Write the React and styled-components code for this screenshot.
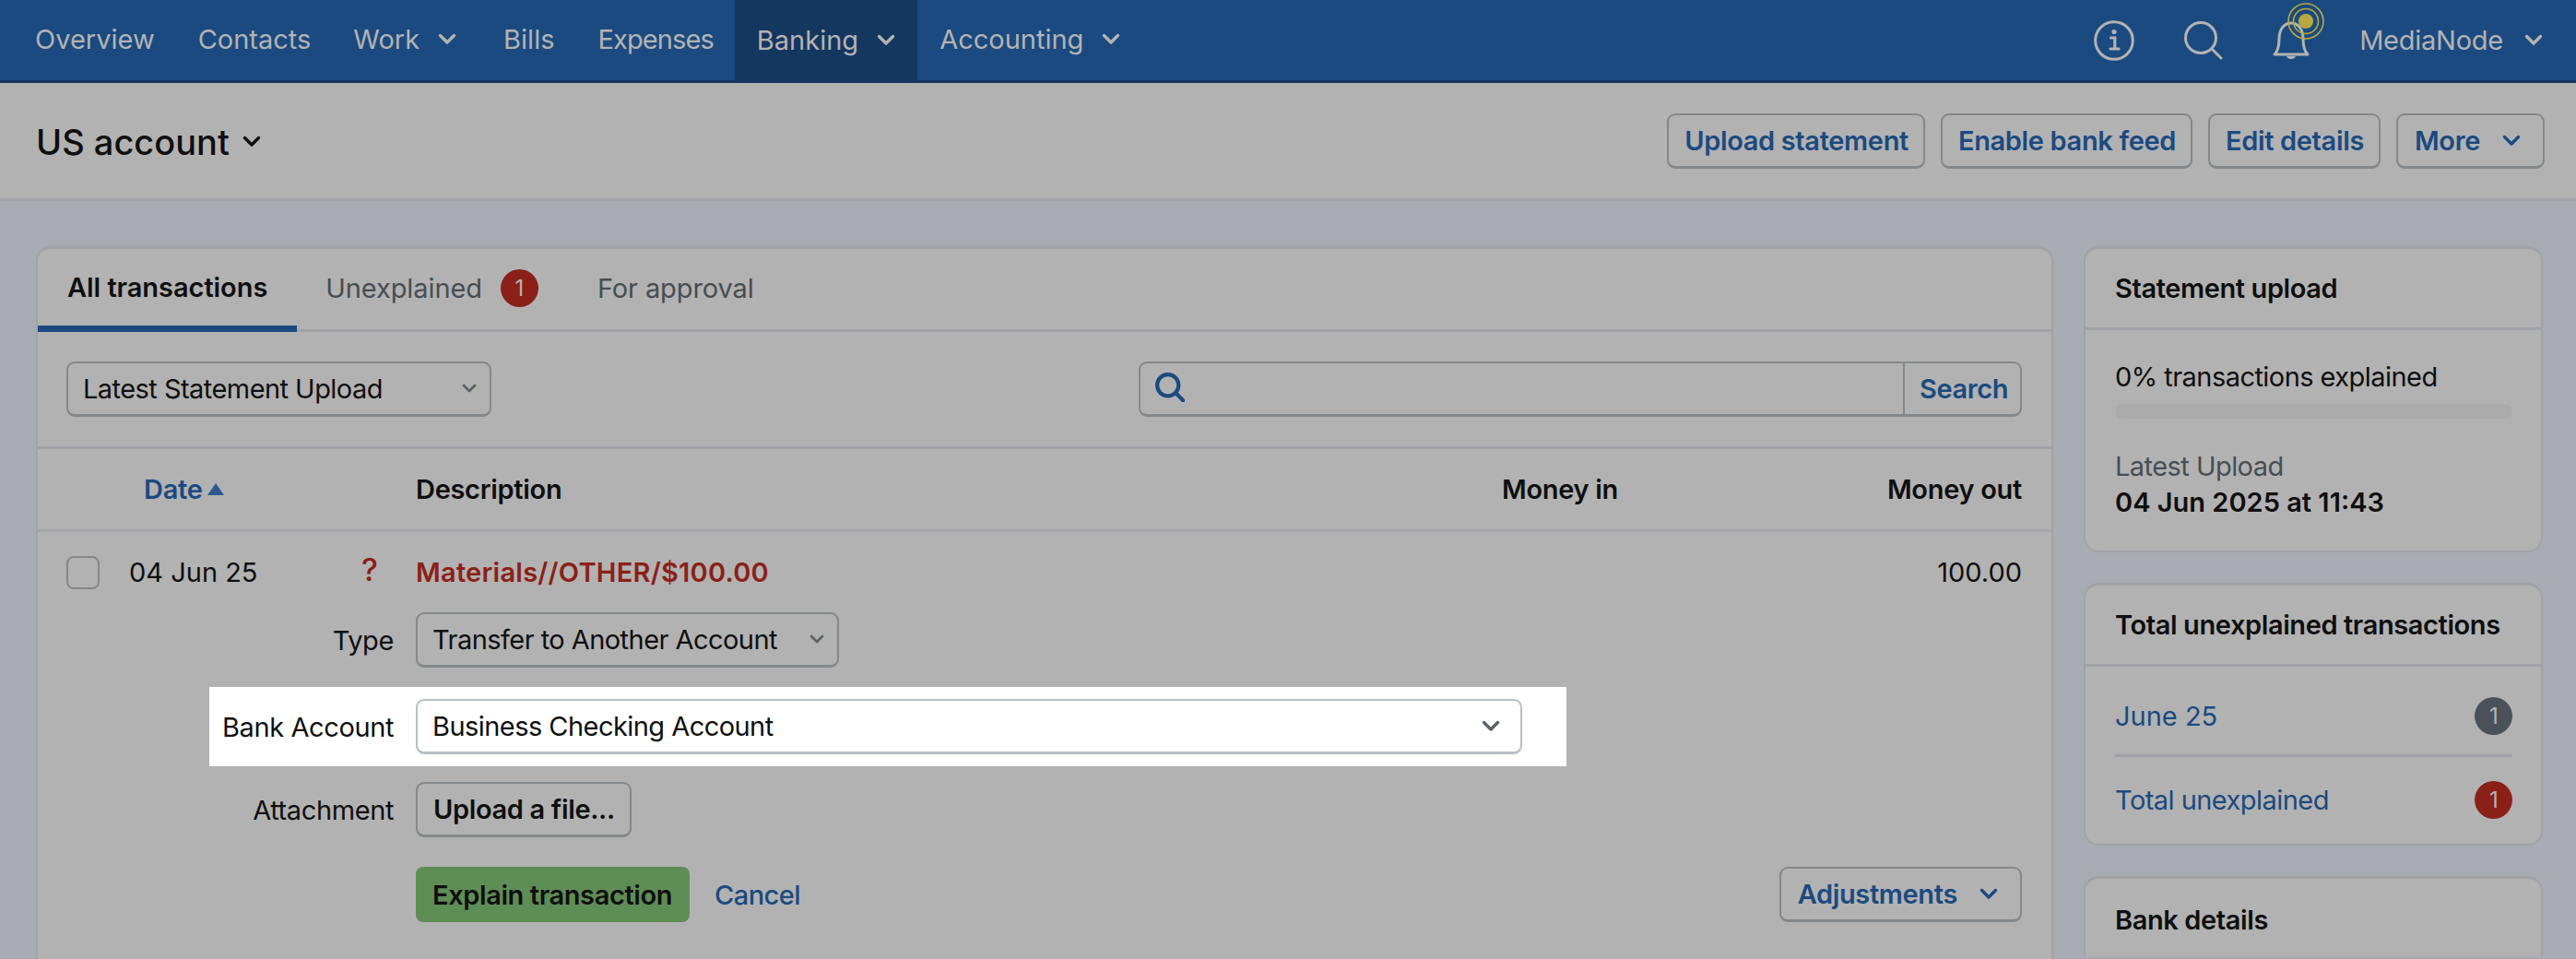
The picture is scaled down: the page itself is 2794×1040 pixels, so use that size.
import React from 'react'
import styled, { createGlobalStyle } from 'styled-components'

const GlobalStyle = createGlobalStyle`
html,body{margin:0;padding:0;height:1040px;overflow:hidden;background:#a8abb1;}
*{box-sizing:border-box;}
body{font-family:Inter,"Noto Sans",sans-serif;color:#0f0f0f;font-size:29px;letter-spacing:-0.55px;}
`;

const BLUE = '#1b4a80';

const Nav = styled.div`
display:flex;
align-items:stretch;
height:90px;
padding-left:38px;
background:${BLUE};
border-bottom:3px solid #14355f;
color:#b3b3b3;
letter-spacing:0;
`;
const NavItem = styled.div`
display:flex;
align-items:center;
gap:20px;
height:${(props)=>props.active ? '90px' : '87px'};
padding:${(props)=>props.active ? '0 24px' : '0'};
margin-right:${(props)=>props.active ? '24px' : `${props.mr || 47}px`};
margin-left:${(props)=>props.active ? '-24px' : '0'};
background:${(props)=>props.active ? '#143760' : 'transparent'};
padding-bottom:3px;
letter-spacing:${(props)=>props.tight ? '-0.9px' : '0'};
`;
const NavRight = styled.div`
margin-left:auto;
display:flex;
align-items:center;
padding-right:36px;
height:87px;
`;
const IconSlot = styled.div`
position:relative;
display:flex;
width:${(props)=>props.w}px;
margin-right:54px;
`;
const Pulse = styled.svg`
position:absolute;
left:16px;
top:-19px;
`;
const Account = styled.div`
display:flex;
align-items:center;
gap:23px;
letter-spacing:-0.25px;
`;

const Header = styled.div`
display:flex;
align-items:center;
justify-content:space-between;
height:128px;
padding:0 34px 0 39px;
background:#b2b2b2;
border-bottom:3px solid #a1a3a7;
`;
const Title = styled.div`
display:flex;
align-items:center;
gap:14px;
margin-top:2px;
font-size:38px;
font-weight:500;
letter-spacing:0;
`;
const Actions = styled.div`
display:flex;
gap:17px;
`;
const Button = styled.div`
display:inline-flex;
align-items:center;
gap:${(props)=>props.gap || 0}px;
height:60px;
padding:${(props)=>props.menu ? '0 24px 0 18px' : '0 16px 0 17px'};
border:2px solid #85888a;
border-bottom-width:3px;
border-radius:9px;
font-weight:600;
letter-spacing:-0.35px;
color:${(props)=>props.dark ? '#0f0f0f' : BLUE};
`;
const GreenButton = styled.div`
display:flex;
align-items:center;
height:60px;
padding:0 19px 0 18px;
background:#5f8d56;
border-radius:8px;
font-weight:600;
letter-spacing:-0.4px;
`;

const Content = styled.div`
display:flex;
align-items:flex-start;
gap:33px;
padding:49px 36px 0 39px;
`;
const Main = styled.div`
flex:none;
width:2188px;
height:773px;
overflow:hidden;
background:#b2b2b2;
border:2px solid #a0a2a6;
border-top-width:3px;
border-bottom:0;
border-radius:16px 16px 0 0;
box-shadow:0 0 0 12px rgba(178,178,178,.08);
`;
const Tabs = styled.div`
display:flex;
align-items:stretch;
height:90px;
border-bottom:3px solid #a0a2a6;
`;
const Tab = styled.div`
display:flex;
align-items:center;
gap:20px;
margin-bottom:-3px;
padding:${(props)=>props.active ? '0 32px 0 32px' : '0 33px 5px 31px'};
font-weight:${(props)=>props.active ? 600 : 400};
color:${(props)=>props.active ? '#0f0f0f' : '#474d52'};
border-bottom:${(props)=>props.active ? `7px solid ${BLUE}` : '0'};
letter-spacing:${(props)=>props.active ? '-0.05px' : '-0.1px'};
`;
const Badge = styled.span`
display:inline-flex;
align-items:center;
justify-content:center;
width:41px;
height:41px;
border-radius:50%;
background:${(props)=>props.grey ? '#4a5158' : '#8b2018'};
color:#b3b3b3;
font-size:24px;
`;
const Filters = styled.div`
display:flex;
justify-content:space-between;
align-items:flex-start;
height:127px;
padding:32px 32px 0 31px;
border-bottom:3px solid #a0a2a6;
`;
const Select = styled.div`
display:flex;
align-items:center;
justify-content:space-between;
width:${(props)=>props.w}px;
height:60px;
padding:0 ${(props)=>props.pr || 14}px 0 16px;
border:2px solid ${(props)=>props.light ? '#b8bec4' : '#85888a'};
border-bottom-width:3px;
border-radius:9px;
background:${(props)=>props.light ? '#fff' : 'transparent'};
`;
const SearchBox = styled.div`
display:flex;
align-items:stretch;
width:958px;
height:60px;
border:2px solid #85888a;
border-bottom-width:3px;
border-radius:9px;
`;
const SearchField = styled.div`
flex:1;
display:flex;
align-items:center;
padding:0 0 4px 16px;
border-right:2px solid #85888a;
`;
const SearchLabel = styled.div`
display:flex;
align-items:center;
width:125px;
padding-left:16px;
font-weight:600;
letter-spacing:-0.4px;
color:${BLUE};
`;
const TableHead = styled.div`
display:grid;
grid-template-columns:295px 1fr auto 438px;
align-items:center;
height:90px;
padding:0 32px 0 115px;
border-bottom:3px solid #a5a7ad;
font-weight:600;
letter-spacing:-0.3px;
`;
const SortLink = styled.div`
display:flex;
align-items:center;
gap:4px;
color:${BLUE};
`;
const Right = styled.div`
text-align:right;
`;
const Line = styled.div`
display:grid;
grid-template-columns:68px 252px 59px 1fr auto;
align-items:center;
height:87px;
padding:0 32px 0 31px;
letter-spacing:0;
`;
const Check = styled.div`
width:36px;
height:36px;
border:2px solid #85888a;
border-radius:8px;
`;
const Question = styled.div`
color:#8b2018;
font-weight:500;
font-size:34px;
margin-top:-6px;
`;
const RedLink = styled.div`
color:#8b2018;
font-weight:600;
letter-spacing:0.25px;
`;
const FormRow = styled.div`
display:flex;
align-items:center;
gap:24px;
margin-left:186px;
margin-top:${(props)=>props.mt || 0}px;
width:${(props)=>props.spot ? '1472px' : 'auto'};
height:${(props)=>props.spot ? '86px' : 'auto'};
background:${(props)=>props.spot ? '#fff' : 'transparent'};
`;
const Label = styled.div`
flex:none;
width:200px;
text-align:right;
letter-spacing:-0.4px;
`;
const FormActions = styled.div`
display:flex;
align-items:center;
gap:27px;
margin:32px 32px 0 410px;
`;
const LinkText = styled.div`
color:${BLUE};
font-weight:${(props)=>props.medium ? 500 : 400};
letter-spacing:${(props)=>props.flat ? '0' : 'inherit'};
`;
const Push = styled.div`
margin-left:auto;
`;

const Side = styled.div`
flex:none;
width:498px;
display:flex;
flex-direction:column;
gap:33px;
`;
const SideCard = styled.div`
background:#b2b2b2;
border:2px solid #a0a2a6;
border-top-width:3px;
border-bottom:${(props)=>props.cut ? '0' : '2px solid #a0a2a6'};
border-radius:${(props)=>props.cut ? '16px 16px 0 0' : '16px'};
height:${(props)=>props.h}px;
overflow:hidden;
box-shadow:0 0 0 12px rgba(178,178,178,.08);
`;
const SideTitle = styled.div`
display:flex;
align-items:center;
height:88px;
padding:0 32px;
font-weight:600;
letter-spacing:-0.4px;
border-bottom:${(props)=>props.plain ? '0' : '3px solid #a0a2a6'};
`;
const SideBody = styled.div`
padding:${(props)=>props.pad || '0 31px 0 32px'};
`;
const Progress = styled.div`
height:16px;
margin-top:12px;
border-radius:8px;
background:#ababab;
`;
const Muted = styled.div`
margin-top:34px;
color:#474d52;
`;
const Strong = styled.div`
margin-top:4px;
font-weight:600;
letter-spacing:0;
`;
const SideRow = styled.div`
display:flex;
align-items:center;
justify-content:space-between;
height:${(props)=>props.h}px;
padding-top:${(props)=>props.pt || 0}px;
border-bottom:${(props)=>props.line ? '3px solid #a0a2a6' : '0'};
`;

const Chevron = ({ size = 20, color = 'currentColor', sw = 3.4 }) => (
  <svg width={size} height={size * 0.65} viewBox="0 0 20 13" fill="none">
    <path d="M2.5 2.5 L10 10 L17.5 2.5" stroke={color} strokeWidth={sw} strokeLinecap="round" strokeLinejoin="round" />
  </svg>
);

const InfoIcon = () => (
  <svg width="44" height="44" viewBox="0 0 44 44" fill="none">
    <circle cx="22" cy="22" r="20.3" stroke="#b3b3b3" strokeWidth="3" />
    <circle cx="22" cy="12.5" r="2.6" fill="#b3b3b3" />
    <path d="M18.5 19 H22.8 V30 M18 31 H27" stroke="#b3b3b3" strokeWidth="3.2" strokeLinecap="round" />
  </svg>
);

const SearchIcon = ({ size = 42, color = '#b3b3b3', sw = 3 }) => (
  <svg width={size} height={size} viewBox="0 0 42 42" fill="none">
    <circle cx="18" cy="18" r={18 - (sw * 21) / size} stroke={color} strokeWidth={(sw * 42) / size} />
    <path d="M30 30 L40 40" stroke={color} strokeWidth={(sw * 42) / size} strokeLinecap="round" />
  </svg>
);

const BellIcon = () => (
  <svg width="40" height="44" viewBox="0 0 40 44" fill="none">
    <path d="M2 37 C6 33 7 28 7 20 C7 9 13 3 20 3 C27 3 33 9 33 20 C33 28 34 33 38 37 Z" stroke="#b3b3b3" strokeWidth="3" strokeLinejoin="round" />
    <path d="M15 39 C16 43 24 43 25 39 Z" fill="#b3b3b3" />
  </svg>
);

const Triangle = () => (
  <svg width="20" height="16" viewBox="0 0 20 16"><path d="M10 1 L19 14 H1 Z" fill="#2d5a8e" /></svg>
);

export default function App() {
  return (
    <>
      <GlobalStyle />
      <Nav>
        <NavItem>Overview</NavItem>
        <NavItem mr={46}>Contacts</NavItem>
        <NavItem mr={51}>Work <Chevron /></NavItem>
        <NavItem>Bills</NavItem>
        <NavItem tight>Expenses</NavItem>
        <NavItem active>Banking <Chevron /></NavItem>
        <NavItem>Accounting <Chevron /></NavItem>
        <NavRight>
          <IconSlot w={44}><InfoIcon /></IconSlot>
          <IconSlot w={42}><SearchIcon /></IconSlot>
          <IconSlot w={40}>
            <BellIcon />
            <Pulse width="40" height="40" viewBox="0 0 40 40" fill="none">
              <circle cx="20" cy="20" r="8" fill="#b8a93e" />
              <circle cx="20" cy="20" r="13.5" stroke="#b8a93e" strokeWidth="1.6" />
              <circle cx="20" cy="20" r="19" stroke="#b8a93e" strokeWidth="1.6" />
            </Pulse>
          </IconSlot>
          <Account>MediaNode <Chevron /></Account>
        </NavRight>
      </Nav>
      <Header>
        <Title>US account <Chevron color="#0f0f0f" /></Title>
        <Actions>
          <Button>Upload statement</Button>
          <Button>Enable bank feed</Button>
          <Button>Edit details</Button>
          <Button menu gap={24}>More <Chevron color={BLUE} /></Button>
        </Actions>
      </Header>
      <Content>
        <Main>
          <Tabs>
            <Tab active>All transactions</Tab>
            <Tab>Unexplained <Badge>1</Badge></Tab>
            <Tab>For approval</Tab>
          </Tabs>
          <Filters>
            <Select w={461}>Latest Statement Upload <Chevron size={16} color="#5a6167" /></Select>
            <SearchBox>
              <SearchField><SearchIcon size={32} color={BLUE} sw={4.2} /></SearchField>
              <SearchLabel>Search</SearchLabel>
            </SearchBox>
          </Filters>
          <TableHead>
            <SortLink>Date <Triangle /></SortLink>
            <div>Description</div>
            <div>Money in</div>
            <Right>Money out</Right>
          </TableHead>
          <Line>
            <Check />
            <div>04 Jun 25</div>
            <Question>?</Question>
            <RedLink>Materials//OTHER/$100.00</RedLink>
            <div>100.00</div>
          </Line>
          <FormRow>
            <Label>Type</Label>
            <Select w={459}>Transfer to Another Account <Chevron size={16} color="#5a6167" /></Select>
          </FormRow>
          <FormRow spot mt={21}>
            <Label>Bank Account</Label>
            <Select light w={1200} pr={22}>Business Checking Account <Chevron size={20} color="#5a6167" /></Select>
          </FormRow>
          <FormRow mt={17}>
            <Label>Attachment</Label>
            <Button dark>Upload a file...</Button>
          </FormRow>
          <FormActions>
            <GreenButton>Explain transaction</GreenButton>
            <LinkText medium>Cancel</LinkText>
            <Push>
              <Button menu gap={24}>Adjustments <Chevron color={BLUE} /></Button>
            </Push>
          </FormActions>
        </Main>
        <Side>
          <SideCard h={332}>
            <SideTitle>Statement upload</SideTitle>
            <SideBody pad="33px 31px 0 32px">
              <div>0% transactions explained</div>
              <Progress />
              <Muted>Latest Upload</Muted>
              <Strong>04 Jun 2025 at 11:43</Strong>
            </SideBody>
          </SideCard>
          <SideCard h={285}>
            <SideTitle>Total unexplained transactions</SideTitle>
            <SideBody>
              <SideRow h={98} pt={12} line><LinkText flat>June 25</LinkText><Badge grey>1</Badge></SideRow>
              <SideRow h={92}><LinkText>Total unexplained</LinkText><Badge>1</Badge></SideRow>
            </SideBody>
          </SideCard>
          <SideCard cut h={87}>
            <SideTitle plain>Bank details</SideTitle>
          </SideCard>
        </Side>
      </Content>
    </>
  )
}
